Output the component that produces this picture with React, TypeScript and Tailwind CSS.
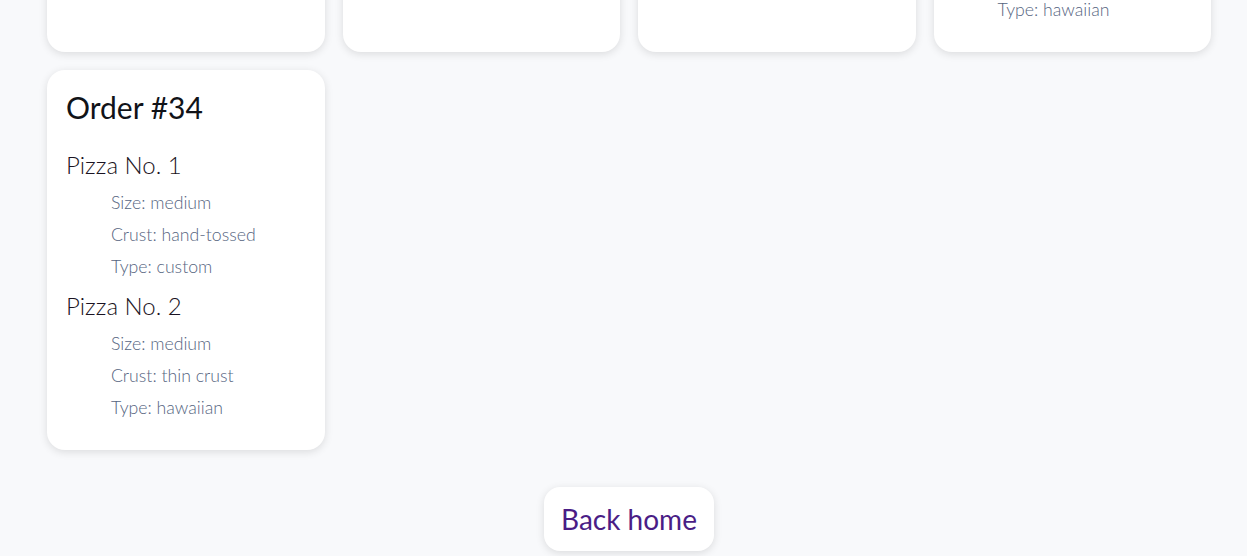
import React from "react"

type Pizza = { size: string; crust: string; type: string }
type Order = { id: number; pizzas: Pizza[] }

const orders: Order[] = [
  { id: 30, pizzas: [{ size: "large", crust: "hand-tossed", type: "pepperoni" }] },
  { id: 31, pizzas: [{ size: "medium", crust: "thin crust", type: "custom" }] },
  { id: 32, pizzas: [{ size: "small", crust: "hand-tossed", type: "cheese" }] },
  { id: 33, pizzas: [{ size: "medium", crust: "hand-tossed", type: "custom" }, { size: "medium", crust: "thin crust", type: "hawaiian" }] },
  { id: 34, pizzas: [{ size: "medium", crust: "hand-tossed", type: "custom" }, { size: "medium", crust: "thin crust", type: "hawaiian" }] },
]

function OrderCard({ order }: { order: Order }) {
  return (
    <div className="bg-white rounded-[18px] shadow-[0_2px_8px_rgba(0,0,0,0.12)] px-[19px] pt-[17px] pb-[26px]">
      <h2 className="text-[30px] leading-[40px] text-[#111318] font-normal">Order #{order.id}</h2>
      {order.pizzas.map((p, i) => (
        <div key={i} className={i === 0 ? "mt-[23px]" : "mt-[8px]"}>
          <h3 className="text-[24px] leading-[30px] font-light text-[#1a1322]">Pizza No. {i + 1}</h3>
          <ul className="pl-[45px] mt-[7px] text-[17.7px] leading-[32px] font-light text-[#56657f]">
            <li>Size: {p.size}</li>
            <li>Crust: {p.crust}</li>
            <li>Type: {p.type}</li>
          </ul>
        </div>
      ))}
    </div>
  )
}

export default function App() {
  return (
    <div
      className="min-h-screen bg-[#f8f9fb] overflow-hidden"
      style={{ fontFamily: "Lato, 'Noto Sans', sans-serif" }}
    >
      <div className="h-[556px] overflow-hidden pl-[47px] pr-[36px]">
        <div className="-mt-[328px] grid grid-cols-4 gap-x-[18px] gap-y-[18px]">
          {orders.map((o) => (
            <OrderCard key={o.id} order={o} />
          ))}
        </div>
        <div className="flex justify-center mt-[37px]">
          <button className="bg-white rounded-[16px] shadow-[0_2px_8px_rgba(0,0,0,0.12)] px-[17px] h-[64px] text-[28px] text-[#4a1d86]">
            Back home
          </button>
        </div>
      </div>
    </div>
  )
}
